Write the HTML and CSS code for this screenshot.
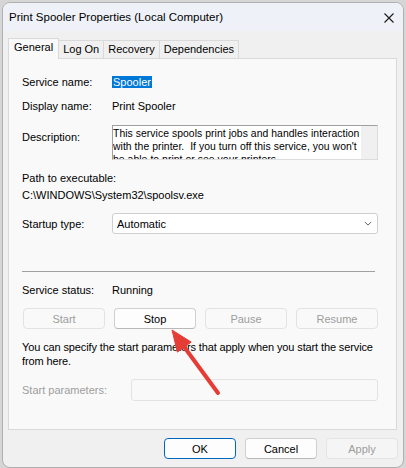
FILE: index.html
```html
<!DOCTYPE html>
<html lang="en">
    <head>
        <meta charset="utf-8">
        <title>Print Spooler Properties (Local Computer)</title>
        <link rel="stylesheet" href="styles.css">
    </head>
    <body>
        <div class="window">
            <div class="titlebar">
                <span class="title">Print Spooler Properties (Local Computer)</span>
                <svg class="close" viewBox="0 0 10 10"><path d="M0.5 0.5L9.5 9.5M9.5 0.5L0.5 9.5"/></svg>
            </div>
            <div class="dialog">
                <div class="tabs">
                    <div class="tab active">General</div>
                    <div class="tab">Log On</div>
                    <div class="tab">Recovery</div>
                    <div class="tab">Dependencies</div>
                </div>
                <div class="panel">
                    <div class="field">
                        <span>Service name:</span>
                        <span><span class="selected">Spooler</span></span>
                    </div>
                    <div class="field gap-8">
                        <span>Display name:</span>
                        <span>Print Spooler</span>
                    </div>
                    <div class="field desc-row">
                        <span class="desc-label">Description:</span>
                        <div class="desc-box">
                            <div class="desc-text">This service spools print jobs and handles interaction with the printer.&nbsp; If you turn off this service, you won't be able to print or see your printers.</div>
                            <div class="desc-scroll"></div>
                        </div>
                    </div>
                    <div class="path">
                        <div>Path to executable:</div>
                        <div>C:\WINDOWS\System32\spoolsv.exe</div>
                    </div>
                    <div class="field startup">
                        <span>Startup type:</span>
                        <div class="select">
                            <span>Automatic</span>
                            <svg viewBox="0 0 10 6"><path d="M1 1L5 5L9 1"/></svg>
                        </div>
                    </div>
                    <div class="separator"></div>
                    <div class="field status">
                        <span>Service status:</span>
                        <span>Running</span>
                    </div>
                    <div class="controls">
                        <button class="btn" disabled>Start</button>
                        <button class="btn">Stop</button>
                        <button class="btn" disabled>Pause</button>
                        <button class="btn" disabled>Resume</button>
                    </div>
                    <p class="note">You can specify the start parameters that apply when you start the service from here.</p>
                    <div class="params">
                        <span>Start parameters:</span>
                        <div class="input"></div>
                    </div>
                </div>
                <div class="actions">
                    <button class="btn default">OK</button>
                    <button class="btn">Cancel</button>
                    <button class="btn" disabled>Apply</button>
                </div>
            </div>
        </div>

        <svg class="arrow" viewBox="0 0 406 468">
            <line x1="218" y1="393" x2="182" y2="344"/>
            <polygon points="172,330 177.4,352.1 191.2,342.1"/>
        </svg>
    </body>
</html>
```

FILE: styles.css
```css
html, body {height: 100%}
body {
    margin: 0;
    padding: 2px 2px 0 2px;
    box-sizing: border-box;
    background: #d6d6d6;
    font-family: "Liberation Sans", Arial, sans-serif;
    font-size: 11px;
    color: #000;
}
.window {
    height: 466px;
    box-sizing: border-box;
    border: 1px solid #b0b0b0;
    border-radius: 8px;
    background: #f0f0f0;
    overflow: hidden;
}
.titlebar {
    height: 28px;
    background: #eef2f8;
    display: flex;
    align-items: center;
    justify-content: space-between;
    padding: 0 9px 0 6px;
}
.title {
    font-size: 11.5px;
    margin-top: -1px;
}
.close {
    width: 10px;
    height: 10px;
    stroke: #1a1a1a;
    stroke-width: 1.1;
    margin-top: 1px;
}
.dialog {
    padding: 7px 6px 0 5px;
}
.tabs {
    display: flex;
    align-items: flex-end;
    height: 21px;
    margin-bottom: -1px;
}
.tab {
    height: 19px;
    box-sizing: border-box;
    line-height: 17px;
    padding: 0 4px;
    border: 1px solid #d9d9d9;
    border-bottom: none;
    margin-left: -1px;
}
.tab:first-child {
    margin-left: 0;
}
.tab.active {
    height: 21px;
    line-height: 17px;
    padding: 0 5px;
    background: #f9f9f9;
    position: relative;
    z-index: 1;
}
.panel {
    height: 372px;
    box-sizing: border-box;
    background: #f9f9f9;
    border: 1px solid #d9d9d9;
    padding: 15px 18px 0 13px;
}
.field {
    display: grid;
    grid-template-columns: 90px 1fr;
    align-items: center;
    line-height: 16px;
}
.gap-8 {
    margin-top: 8px;
}
.selected {
    background: #0078d7;
    color: #fff;
    padding: 0 1px;
}
.desc-row {
    margin-top: 11px;
    align-items: start;
}
.desc-label {
    padding-top: 4px;
}
.desc-box {
    display: flex;
    height: 35px;
    box-sizing: border-box;
    background: #fff;
    border: 1px solid #dcdcdc;
    border-top-color: #a0a0a0;
    border-left-color: #a0a0a0;
}
.desc-text {
    flex: 1;
    overflow: hidden;
    font-size: 10.4px;
    line-height: 13px;
    padding-top: 1px;
    letter-spacing: 0.05px;
}
.desc-scroll {
    flex: none;
    width: 16px;
    background: #f0f0f0;
}
.path {
    margin-top: 10px;
    line-height: 17px;
}
.startup {
    margin-top: 9px;
}
.select {
    height: 21px;
    box-sizing: border-box;
    background: #fff;
    border: 1px solid #cfcfcf;
    border-radius: 3px;
    display: flex;
    align-items: center;
    justify-content: space-between;
    padding: 0 5px 0 4px;
}
.select svg {
    width: 8px;
    height: 5px;
    fill: none;
    stroke: #5a5a5a;
    stroke-width: 1.2;
}
.separator {
    margin-top: 37px;
    width: calc(100% - 3px);
    border-top: 1px solid #a0a0a0;
}
.status {
    margin-top: 10px;
}
.controls {
    margin-top: 10px;
    display: grid;
    grid-template-columns: repeat(4, 1fr);
    gap: 9px;
    padding-left: 1px;
}
.btn {
    height: 21px;
    box-sizing: border-box;
    font: inherit;
    color: #000;
    background: #fdfdfd;
    border: 1px solid #d0d0d0;
    border-bottom-color: #b8b8b8;
    border-radius: 4px;
    padding: 0;
}
.btn:disabled {
    color: #9d9d9d;
    background: #f9f9f9;
    border-color: #e3e3e3;
}
.note {
    margin: 11px 0 0;
    line-height: 14px;
    letter-spacing: -0.12px;
}
.params {
    margin-top: 11px;
    display: grid;
    grid-template-columns: 109px 1fr;
    align-items: center;
    color: #9d9d9d;
}
.input {
    height: 22px;
    box-sizing: border-box;
    border: 1px solid #e3e3e3;
    border-radius: 3px;
    background: #f9f9f9;
}
.actions {
    display: flex;
    justify-content: flex-end;
    gap: 9px;
    margin-top: 8px;
    margin-right: -1px;
}
.actions .btn {
    width: 72px;
}
.actions .btn:disabled {
    background: #f5f5f5;
}
.btn.default {
    border-color: #0067c0;
}
.arrow {
    position: absolute;
    left: 0;
    top: 0;
    width: 406px;
    height: 468px;
    pointer-events: none;
}
.arrow line {
    stroke: #e53c35;
    stroke-width: 4;
    stroke-linecap: round;
}
.arrow polygon {
    fill: #e53c35;
    stroke: #e53c35;
    stroke-width: 1;
    stroke-linejoin: round;
}
```
